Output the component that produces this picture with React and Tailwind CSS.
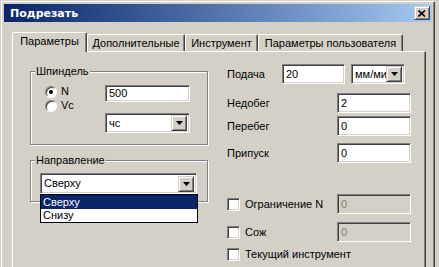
import React from "react";

const sunken = "border border-t-[#808080] border-l-[#808080] border-b-white border-r-white shadow-[inset_1px_1px_0_#404040,inset_-1px_-1px_0_#d4d0c8]";
const raised = "border border-t-[#d4d0c8] border-l-[#d4d0c8] border-b-[#404040] border-r-[#404040] shadow-[inset_1px_1px_0_#fff,inset_-1px_-1px_0_#808080]";

function Arrow() {
  return (
    <div className={`w-[16px] h-[16px] bg-[#d4d0c8] flex items-center justify-center shrink-0 ${raised}`}>
      <svg width="7" height="4" viewBox="0 0 7 4"><path d="M0 0h7L3.5 4z" fill="#000" /></svg>
    </div>
  );
}

function Input({ w, value, disabled, h = "h-[20px]" }) {
  return (
    <div className={`${w} ${h} ${sunken} ${disabled ? "bg-[#d4d0c8] text-[#808080]" : "bg-white text-black"} flex items-center pl-[3px] leading-none`}>
      {value}
    </div>
  );
}

function Combo({ w, value, h = "h-[20px]" }) {
  return (
    <div className={`${w} ${h} ${sunken} bg-white flex items-center justify-between pl-[3px] pr-[2px] overflow-hidden leading-none`}>
      <span className="whitespace-nowrap overflow-hidden min-w-0">{value}</span>
      <Arrow />
    </div>
  );
}

function Radio({ checked }) {
  return (
    <div className="w-[12px] h-[12px] rounded-full border border-t-[#808080] border-l-[#808080] border-b-white border-r-white bg-white flex items-center justify-center shadow-[inset_1px_1px_0_#404040]">
      {checked && <div className="w-[4px] h-[4px] rounded-full bg-black" />}
    </div>
  );
}

function Check() {
  return <div className={`w-[13px] h-[13px] bg-white ${sunken} shrink-0`} />;
}

function Tab({ w, label, active }) {
  return (
    <div
      className={`${w} ${active ? "h-[20px] z-10 -mb-[1px] bg-[#d4d0c8]" : "h-[17px] bg-[#d4d0c8]"} border-t border-l border-t-white border-l-white border-r border-r-[#404040] rounded-t-[2px] shadow-[inset_-1px_0_0_#808080] flex items-center justify-center leading-none ${active ? "pb-[2px]" : "pt-[1px]"}`}
    >
      {label}
    </div>
  );
}

function Group({ label, className, children }) {
  return (
    <div className={`relative border border-[#808080] shadow-[inset_1px_1px_0_#fff,1px_1px_0_#fff] ${className}`}>
      <span className="absolute -top-[8px] left-[4px] bg-[#d4d0c8] px-[1px] leading-[14px]">{label}</span>
      {children}
    </div>
  );
}

export default function App() {
  return (
    <div className="w-[439px] h-[267px] bg-[#d4d0c8] overflow-hidden text-[11px] text-black" style={{ fontFamily: '"Liberation Sans", Arial, sans-serif' }}>
      <div className="w-[434px] h-[280px] border-t border-l border-t-white border-l-white border-r border-r-[#404040] shadow-[inset_-1px_0_0_#808080] ml-[1px] mt-[1px] pl-[2px] pt-[2px] pr-[2px]">
        {/* title bar */}
        <div className="h-[18px] bg-gradient-to-r from-[#0a246a] to-[#a6caf0] flex items-center justify-between pl-[6px] pr-[2px]">
          <span className="text-white font-bold text-[11px] leading-none" style={{ fontFamily: '"DejaVu Sans", "Liberation Sans", sans-serif' }}>Подрезать</span>
          <div className={`w-[16px] h-[14px] bg-[#d4d0c8] flex items-center justify-center ${raised}`}>
            <svg width="8" height="7" viewBox="0 0 8 7"><path d="M0.5 0.5L7 6.5M7 0.5L0.5 6.5" stroke="#000" strokeWidth="1.6" /></svg>
          </div>
        </div>
        {/* body */}
        <div className="pl-[8px] pt-[9px] pr-[6px]">
          <div className="flex items-end h-[20px]">
            <Tab w="w-[75px]" label="Параметры" active />
            <Tab w="w-[98px]" label="Дополнительные" />
            <Tab w="w-[73px]" label="Инструмент" />
            <Tab w="w-[145px]" label="Параметры пользователя" />
          </div>
          <div className="h-[230px] border-t border-l border-t-white border-l-white border-r border-r-[#404040] shadow-[inset_-1px_0_0_#808080] flex">
            {/* left column */}
            <div className="w-[214px] pl-[17px] pt-[19px]">
              <Group label="Шпиндель" className="w-[178px] h-[74px]">
                <div className="flex pl-[14px] pt-[13px]">
                  <div className="w-[60px] flex flex-col gap-[1px]">
                    <div className="flex items-center gap-[4px] h-[13px]"><Radio checked /><span>N</span></div>
                    <div className="flex items-center gap-[4px] h-[13px]"><Radio /><span>Vc</span></div>
                  </div>
                  <div className="flex flex-col gap-[11px]">
                    <Input w="w-[85px]" h="h-[17px]" value="500" />
                    <Combo w="w-[85px]" h="h-[20px]" value="чс" />
                  </div>
                </div>
              </Group>
              <Group label="Направление" className="w-[178px] h-[42px] mt-[15px]">
                <div className="relative pl-[9px] pt-[12px]">
                  <Combo w="w-[157px]" h="h-[21px]" value="Сверху" />
                  <div className="absolute left-[9px] top-[33px] w-[158px] border border-black bg-white z-20">
                    <div className="h-[14px] bg-[#0a246a] text-white pl-[2px] leading-[14px]">Сверху</div>
                    <div className="h-[13px] pl-[2px] leading-[13px]">Снизу</div>
                  </div>
                </div>
              </Group>
            </div>
            {/* right column */}
            <div className="pt-[12px]">
              <div className="flex items-center h-[20px]">
                <span className="w-[55px]">Подача</span>
                <Input w="w-[63px]" value="20" />
                <div className="w-[6px]" />
                <Combo w="w-[54px]" value="мм/мин" />
              </div>
              <div className="flex items-center h-[20px] mt-[9px]">
                <span className="w-[110px]">Недобег</span>
                <Input w="w-[74px]" value="2" />
              </div>
              <div className="flex items-center h-[20px] mt-[3px]">
                <span className="w-[110px]">Перебег</span>
                <Input w="w-[74px]" value="0" />
              </div>
              <div className="flex items-center h-[20px] mt-[7px]">
                <span className="w-[110px]">Припуск</span>
                <Input w="w-[74px]" value="0" />
              </div>
              <div className="flex items-center h-[20px] mt-[31px]">
                <div className="w-[110px] flex items-center gap-[5px]"><Check /><span>Ограничение N</span></div>
                <Input w="w-[74px]" value="0" disabled />
              </div>
              <div className="flex items-center h-[20px] mt-[8px]">
                <div className="w-[110px] flex items-center gap-[5px]"><Check /><span>Сож</span></div>
                <Input w="w-[74px]" value="0" disabled />
              </div>
              <div className="flex items-center h-[13px] mt-[6px]">
                <div className="flex items-center gap-[5px]"><Check /><span>Текущий инструмент</span></div>
              </div>
            </div>
          </div>
        </div>
      </div>
    </div>
  );
}
